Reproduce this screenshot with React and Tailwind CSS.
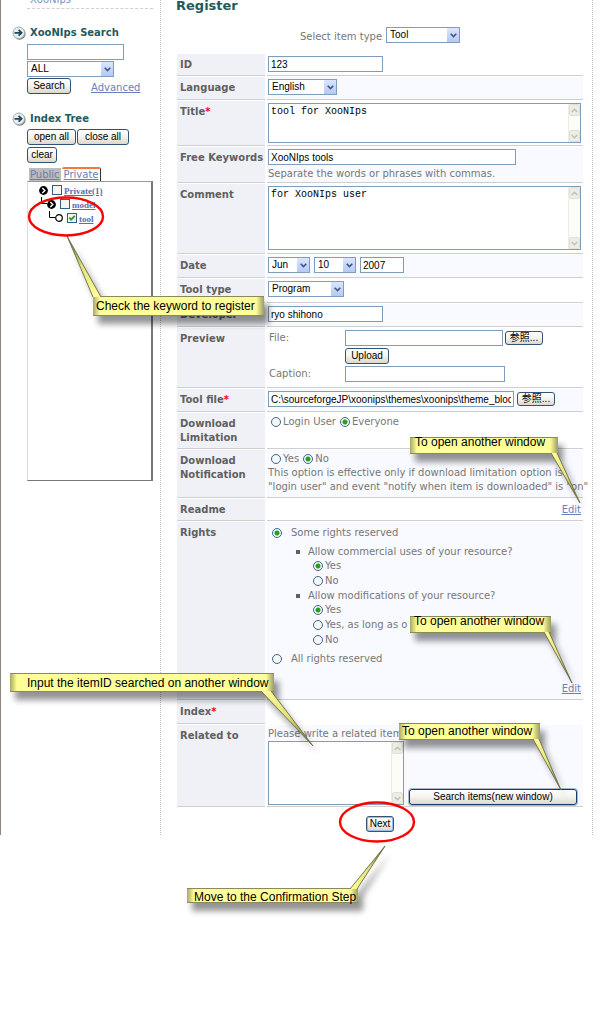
import React from "react";

const FIELD =
  "block h-4 rounded-none border border-[#7f9db9] bg-white px-0.5 font-['Liberation_Sans',sans-serif] text-[10px] leading-3 text-black outline-none";
const BUTTON =
  "flex shrink-0 items-center justify-center whitespace-nowrap rounded-[3px] border border-[#2f5478] bg-linear-to-b from-white via-[#f4f3ee] to-[#dcd8cb] font-['Liberation_Sans','Noto_Sans_CJK_JP',sans-serif] text-[10px] leading-3 text-black";
const LINK = "text-[#6b80bb] underline";

function Select({ label, value, width }) {
  return (
    <span className={`relative block ${width}`}>
      <select aria-label={label} defaultValue={value} className={`${FIELD} w-full appearance-none pl-[3px]`}>
        <option>{value}</option>
      </select>
      <span className="pointer-events-none absolute top-px right-px flex h-3.5 w-3 items-center justify-center bg-linear-to-b from-[#dbe6fe] to-[#b4c9f7]">
        <svg width="7" height="5" viewBox="0 0 7 5" fill="none" stroke="#40547c" strokeWidth="1.6">
          <path d="M0.7 0.8 3.5 3.6 6.3 0.8" />
        </svg>
      </span>
    </span>
  );
}

function ScrollArrow({ up }) {
  return (
    <span className="flex h-3 w-[11px] items-center justify-center rounded-[2px] border border-[#e2e0d4] bg-[#eeede5]">
      <svg width="7" height="5" viewBox="0 0 7 5" fill="none" stroke="#c3c1b5" strokeWidth="1.5">
        <path d={up ? "M0.7 4 3.5 1.2 6.3 4" : "M0.7 1 3.5 3.8 6.3 1"} />
      </svg>
    </span>
  );
}

function TextArea({ id, value, size }) {
  return (
    <div className={`relative ${size}`}>
      <textarea
        id={id}
        defaultValue={value}
        className="block h-full w-full resize-none overflow-hidden border border-[#7f9db9] bg-white py-0.5 pr-4 pl-0.5 font-['Liberation_Mono',monospace] text-[10px] leading-3 text-black outline-none"
      />
      <div className="pointer-events-none absolute inset-y-px right-px flex w-3 flex-col items-end justify-between border-l border-[#eeede5] bg-[#fdfdf8]">
        <ScrollArrow up />
        <ScrollArrow />
      </div>
    </div>
  );
}

function Radio({ name, label, checked, gap = "gap-0.5" }) {
  return (
    <label className={`flex items-center whitespace-nowrap ${gap}`}>
      <input
        type="radio"
        name={name}
        defaultChecked={checked}
        className="size-2.5 shrink-0 appearance-none rounded-full border border-[#3d6590] bg-[#f6f6f3] checked:bg-[radial-gradient(circle,#21a121_0_2px,#f6f6f3_3px)]"
      />
      {label}
    </label>
  );
}

function Row({ label, htmlFor, required, height, shaded, pad = "pt-0.5", line = "border-[#cfcfcf]", children }) {
  return (
    <div className={`grid grid-cols-[88px_minmax(0,1fr)] gap-x-0.5 ${height}`}>
      <div className="border-b border-[#cfcfcf] bg-[#f0f1f7] pt-1 pl-[3px] font-bold text-[#606060]">
        <label htmlFor={htmlFor}>{label}</label>
        {required && <span className="text-[#ff0000]">*</span>}
      </div>
      <div className={`border-b pr-0.5 pl-px ${line} ${pad} ${shaded ? "bg-[#f8faff]" : "bg-white"}`}>{children}</div>
    </div>
  );
}

function Heading({ children }) {
  return (
    <h2 className="flex items-center gap-1 text-[10px] leading-[14px] font-bold text-[#1f5a61]">
      <svg width="14" height="14" viewBox="0 0 14 14" className="shrink-0">
        <circle cx="7.6" cy="7.8" r="6" fill="#777" />
        <circle cx="6.8" cy="6.8" r="5.8" fill="#e9eef0" stroke="#a3adb2" />
        <path d="M2.5 6.8H10M6.6 3.900 9.600 6.800 6.600 9.700" fill="none" stroke="#1d4a58" strokeWidth="1.8" />
      </svg>
      {children}
    </h2>
  );
}

function TreeArrow() {
  return (
    <svg width="9" height="9" viewBox="0 0 9 9" className="shrink-0">
      <circle cx="4.5" cy="4.5" r="4.4" fill="#000" />
      <path d="M3.3 2l2.6 2.5L3.3 7" fill="none" stroke="#fff" strokeWidth="1.4" />
    </svg>
  );
}

function Elbow() {
  return (
    <svg width="6" height="9" viewBox="0 0 6 9" className="shrink-0 self-start">
      <path d="M0.5 0v6.5H6" fill="none" stroke="#000" />
    </svg>
  );
}

function TreeItem({ label, checked, indent, children }) {
  return (
    <li className={`flex h-[14px] items-center ${indent}`}>
      {children}
      <span className="relative ml-1 block size-2.5 shrink-0">
        <input
          type="checkbox"
          aria-label={label}
          defaultChecked={checked}
          className="block size-full appearance-none border border-[#2f5f86] bg-[#f4f4f1]"
        />
        {checked && (
          <svg viewBox="0 0 10 10" className="pointer-events-none absolute inset-0">
            <path d="M2.3 4.6 4.2 6.7 7.8 2.8" fill="none" stroke="#21a121" strokeWidth="1.8" />
          </svg>
        )}
      </span>
      <a href="#tree" className="mt-0.5 ml-0.5 font-['Liberation_Serif',serif] text-[9px] font-bold text-[#5470b0] underline">
        {label}
      </a>
    </li>
  );
}

/* Yellow note with a pointed tail; coordinates are on the annotation canvas. */
function Callout({ id, box, tail, text, textClass }) {
  const [x, y, w, h] = box;
  return (
    <>
      <svg className="absolute inset-0 size-full overflow-visible">
        <defs>
          <linearGradient id={id}>
            <stop offset="0" stopColor="#a9a965" />
            <stop offset={7 / w} stopColor="#ffff99" />
            <stop offset={1 - 8 / w} stopColor="#ffff99" />
            <stop offset="1" stopColor="#9c9c60" />
          </linearGradient>
          <linearGradient id={`${id}-tail`} gradientUnits="userSpaceOnUse" x1={tail[0]} y1={tail[1]} x2={tail[4]} y2={tail[5]}>
            <stop offset="0" stopColor="#ffff99" />
            <stop offset="0.5" stopColor="#e2e27c" />
            <stop offset="1" stopColor="#5c5c40" />
          </linearGradient>
          <filter id={`${id}-shadow`} x="-20%" y="-40%" width="150%" height="200%">
            <feGaussianBlur stdDeviation="3" />
          </filter>
        </defs>
        <g transform="translate(5 8)" fill="#000" opacity="0.42" filter={`url(#${id}-shadow)`}>
          <rect x={x} y={y} width={w} height={h} />
          <polygon points={tail.join(" ")} />
        </g>
        <rect x={x} y={y} width={w} height={h} fill={`url(#${id})`} />
        <path d={`M${x} ${y + 0.5}h${w}M${x} ${y + h - 0.5}h${w}`} stroke="#8a8a58" />
        <polygon points={tail.join(" ")} fill={`url(#${id}-tail)`} />
        <path
          d={`M${tail[0]} ${tail[1]}L${tail[4]} ${tail[5]}L${tail[2]} ${tail[3]}`}
          fill="none"
          stroke="#6b6b45"
          strokeWidth="0.9"
        />
      </svg>
      <span className={`absolute whitespace-nowrap ${textClass}`}>{text}</span>
    </>
  );
}

function Annotations() {
  return (
    <div className="pointer-events-none absolute inset-0 font-['Liberation_Sans',sans-serif] text-[12px] leading-[14px] text-black">
      <Callout id="n1" box={[93, 296, 171, 20]} tail={[93, 297, 101, 297, 67, 236]} text="Check the keyword to register" textClass="top-[299px] left-[96px]" />
      <Callout id="n2" box={[410, 437, 148, 17]} tail={[551, 453, 557, 453, 580, 503]} text="To open another window" textClass="top-[435px] left-[415px]" />
      <Callout id="n3" box={[410, 616, 141, 17]} tail={[544, 632, 549, 632, 572, 683]} text="To open another window" textClass="top-[614px] left-[414px]" />
      <Callout id="n4" box={[399, 723, 141, 17]} tail={[533, 739, 539, 739, 561, 790]} text="To open another window" textClass="top-[724px] left-[402px]" />
      <Callout id="n5" box={[10, 673, 264, 19]} tail={[261, 691, 271, 691, 313, 746]} text="Input the itemID searched on another window" textClass="top-[676px] left-[27px]" />
      <Callout id="n6" box={[187, 888, 171, 15]} tail={[350, 889, 357, 889, 385, 846]} text="Move to the Confirmation Step" textClass="top-[890px] left-[194px]" />
      <svg className="absolute inset-0 size-full" fill="none" stroke="#f00" strokeWidth="2.4">
        <ellipse cx="66" cy="216.500" rx="37" ry="19" />
        <ellipse cx="377" cy="822" rx="37" ry="19.500" />
      </svg>
    </div>
  );
}

function Sidebar() {
  return (
    <aside className="w-[159px] shrink-0 pl-[11px]">
      <div className="-mt-[7px] mr-[7px] ml-[15px] border-b border-dashed border-[#d0d0d0] pb-px pl-[3px]">
        <a href="#xoonips" className="text-[#8092c4]">XooNIps</a>
      </div>
      <div className="mt-[17px]">
        <Heading>XooNIps Search</Heading>
      </div>
      <div className="mt-1 ml-[15px] flex flex-col items-start gap-px">
        <input aria-label="Search keyword" className={`${FIELD} w-[97px]`} />
        <Select label="Search target" value="ALL" width="w-[87px]" />
        <div className="flex items-center gap-5">
          <button type="button" className={`${BUTTON} h-4 w-11`}>Search</button>
          <a href="#advanced" className={`${LINK} mt-1 leading-3`}>Advanced</a>
        </div>
      </div>
      <div className="mt-[18px]">
        <Heading>Index Tree</Heading>
      </div>
      <div className="mt-[3px] mr-4 ml-[15px] flex flex-wrap gap-x-px gap-y-0.5">
        <button type="button" className={`${BUTTON} h-4 w-[49px]`}>open all</button>
        <button type="button" className={`${BUTTON} h-4 w-[52px]`}>close all</button>
        <button type="button" className={`${BUTTON} h-4 w-[30px]`}>clear</button>
      </div>
      <div className="mt-1 ml-[15px] flex h-[14px] items-end gap-px pl-0.5">
        <a href="#public" className="h-[13px] bg-[#bcbcbc] px-px leading-[13px] text-[#6b7cab] underline">Public</a>
        <a href="#private" className="h-[14px] rounded-t-[2px] border-t-2 border-r border-t-[#f5793b] border-r-[#333] px-0.5 leading-3 text-[#6b80bb] underline">
          Private
        </a>
      </div>
      <div className="mr-[7px] ml-[15px] h-[300px] border border-r-2 border-[#777] border-l-[#ddd] border-t-[#999] pt-px">
        <ul>
          <TreeItem label="Private(1)" indent="pl-[11px]">
            <TreeArrow />
          </TreeItem>
          <TreeItem label="model" indent="pl-[13px]">
            <Elbow />
            <TreeArrow />
          </TreeItem>
          <TreeItem label="tool" checked indent="pl-[21px]">
            <Elbow />
            <svg width="8" height="8" viewBox="0 0 8 8" className="shrink-0">
              <circle cx="4" cy="4" r="3.300" fill="#fff" stroke="#000" strokeWidth="1.200" />
            </svg>
          </TreeItem>
        </ul>
      </div>
    </aside>
  );
}

function RegisterForm() {
  return (
    <form className="pr-[9px] pl-4">
      <h1 className="-ml-px text-[13px] leading-3 font-bold text-[#1f5a61]">Register</h1>
      <div className="mt-3.5 mb-2.5 flex items-center justify-center gap-1">
        <span className="mt-1">Select item type</span>
        <Select label="Select item type" value="Tool" width="w-[74px]" />
      </div>
      <div className="flex flex-col gap-px">
        <Row label="ID" htmlFor="item-id" height="min-h-[22px]">
          <input id="item-id" defaultValue="123" className={`${FIELD} w-[115px]`} />
        </Row>
        <Row label="Language" height="min-h-[23px]" shaded>
          <Select label="Language" value="English" width="w-[69px]" />
        </Row>
        <Row label="Title" htmlFor="title" required height="min-h-[45px]">
          <TextArea id="title" value="tool for XooNIps" size="h-10" />
        </Row>
        <Row label="Free Keywords" htmlFor="keywords" height="min-h-[36px]" shaded>
          <input id="keywords" defaultValue="XooNIps tools" className={`${FIELD} w-[248px]`} />
          <p className="mt-0.5">Separate the words or phrases with commas.</p>
        </Row>
        <Row label="Comment" htmlFor="comment" height="min-h-[70px]">
          <TextArea id="comment" value="for XooNIps user" size="h-16" />
        </Row>
        <Row label="Date" height="min-h-[23px]" shaded>
          <div className="flex gap-1">
            <Select label="Month" value="Jun" width="w-[42px]" />
            <Select label="Day" value="10" width="w-[42px]" />
            <input aria-label="Year" defaultValue="2007" className={`${FIELD} w-11`} />
          </div>
        </Row>
        <Row label="Tool type" height="min-h-[24px]">
          <Select label="Tool type" value="Program" width="w-[76px]" />
        </Row>
        <Row label="Developer" htmlFor="developer" height="min-h-[23px]" shaded>
          <input id="developer" defaultValue="ryo shihono" className={`${FIELD} w-[115px]`} />
        </Row>
        <Row label="Preview" height="min-h-[60px]">
          <div className="grid grid-cols-[75px_1fr] gap-x-px gap-y-0.5 pl-px">
            <label htmlFor="preview-file" className="pt-px">File:</label>
            <div className="flex items-center gap-0.5">
              <input id="preview-file" className={`${FIELD} w-[158px]`} />
              <button type="button" className={`${BUTTON} h-[14px] w-[38px] text-[9px]`}>参照...</button>
            </div>
            <button type="button" className={`${BUTTON} col-start-2 h-4 w-11`}>Upload</button>
            <label htmlFor="caption" className="pt-px">Caption:</label>
            <input id="caption" className={`${FIELD} w-40`} />
          </div>
        </Row>
        <Row label="Tool file" htmlFor="tool-file" required height="min-h-[23px]" shaded>
          <div className="flex items-center gap-[3px]">
            <input
              id="tool-file"
              defaultValue="C:\sourceforgeJP\xoonips\themes\xoonips\theme_blockc"
              className={`${FIELD} w-[246px]`}
            />
            <button type="button" className={`${BUTTON} h-[14px] w-[38px] text-[9px]`}>参照...</button>
          </div>
        </Row>
        <Row label="Download Limitation" height="min-h-[36px]">
          <div className="flex gap-1 pl-[3px]">
            <Radio name="limitation" label="Login User" />
            <Radio name="limitation" label="Everyone" checked />
          </div>
        </Row>
        <Row label="Download Notification" height="min-h-[48px]" shaded>
          <div className="flex gap-1 pl-[3px]">
            <Radio name="notification" label="Yes" />
            <Radio name="notification" label="No" checked />
          </div>
          <p className="whitespace-nowrap">
            This option is effective only if download limitation option is
            <br />
            "login user" and event "notify when item is downloaded" is "on"
          </p>
        </Row>
        <Row label="Readme" height="min-h-[22px]" pad="pt-1">
          <div className="text-right">
            <a href="#readme" className={LINK}>Edit</a>
          </div>
        </Row>
        <Row label="Rights" height="min-h-[178px]" pad="pt-1" shaded>
          <div className="pl-1">
            <Radio name="rights" label="Some rights reserved" checked gap="gap-[9px]" />
            <ul className="mt-[5px] mb-[5px] list-none">
              <li className="flex items-center gap-2 pl-6">
                <span className="size-1 bg-[#606060]" />
                Allow commercial uses of your resource?
              </li>
              <li className="flex flex-col gap-px pb-px pl-[41px]">
                <Radio name="commercial" label="Yes" checked />
                <Radio name="commercial" label="No" />
              </li>
              <li className="flex items-center gap-2 pl-6">
                <span className="size-1 bg-[#606060]" />
                Allow modifications of your resource?
              </li>
              <li className="flex flex-col gap-px pl-[41px]">
                <Radio name="modifications" label="Yes" checked />
                <Radio name="modifications" label="Yes, as long as o" />
                <Radio name="modifications" label="No" />
              </li>
            </ul>
            <Radio name="rights" label="All rights reserved" gap="gap-[9px]" />
          </div>
          <div className="mt-4 text-right">
            <a href="#rights" className={LINK}>Edit</a>
          </div>
        </Row>
        <Row label="Index" required height="min-h-[23px]" line="border-transparent" />
        <Row label="Related to" htmlFor="related" height="min-h-[82px]" shaded>
          <p>Please write a related item</p>
          <div className="flex items-end gap-[5px]">
            <TextArea id="related" size="h-16 w-[136px]" />
            <button type="button" className={`${BUTTON} h-4 w-[168px] border-[#123a6e] shadow-[0_0_0_1px_#123a6e55]`}>
              Search items(new window)
            </button>
          </div>
        </Row>
      </div>
      <div className="mt-[9px] flex justify-center pb-[3px]">
        <button type="button" className={`${BUTTON} h-4 w-7 shadow-[inset_0_0_0_1px_#9dbcf0]`}>Next</button>
      </div>
    </form>
  );
}

export default function App() {
  return (
    <div className="relative min-h-screen overflow-x-hidden bg-white font-['DejaVu_Sans',sans-serif] text-[10px] leading-[14px] text-[#777]">
      <div className="mr-[7px] flex items-stretch border-l border-[#8b877f]">
        <Sidebar />
        <main className="min-w-0 flex-1 border-x border-dotted border-[#bdbdbd]">
          <RegisterForm />
        </main>
      </div>
      <Annotations />
    </div>
  );
}
